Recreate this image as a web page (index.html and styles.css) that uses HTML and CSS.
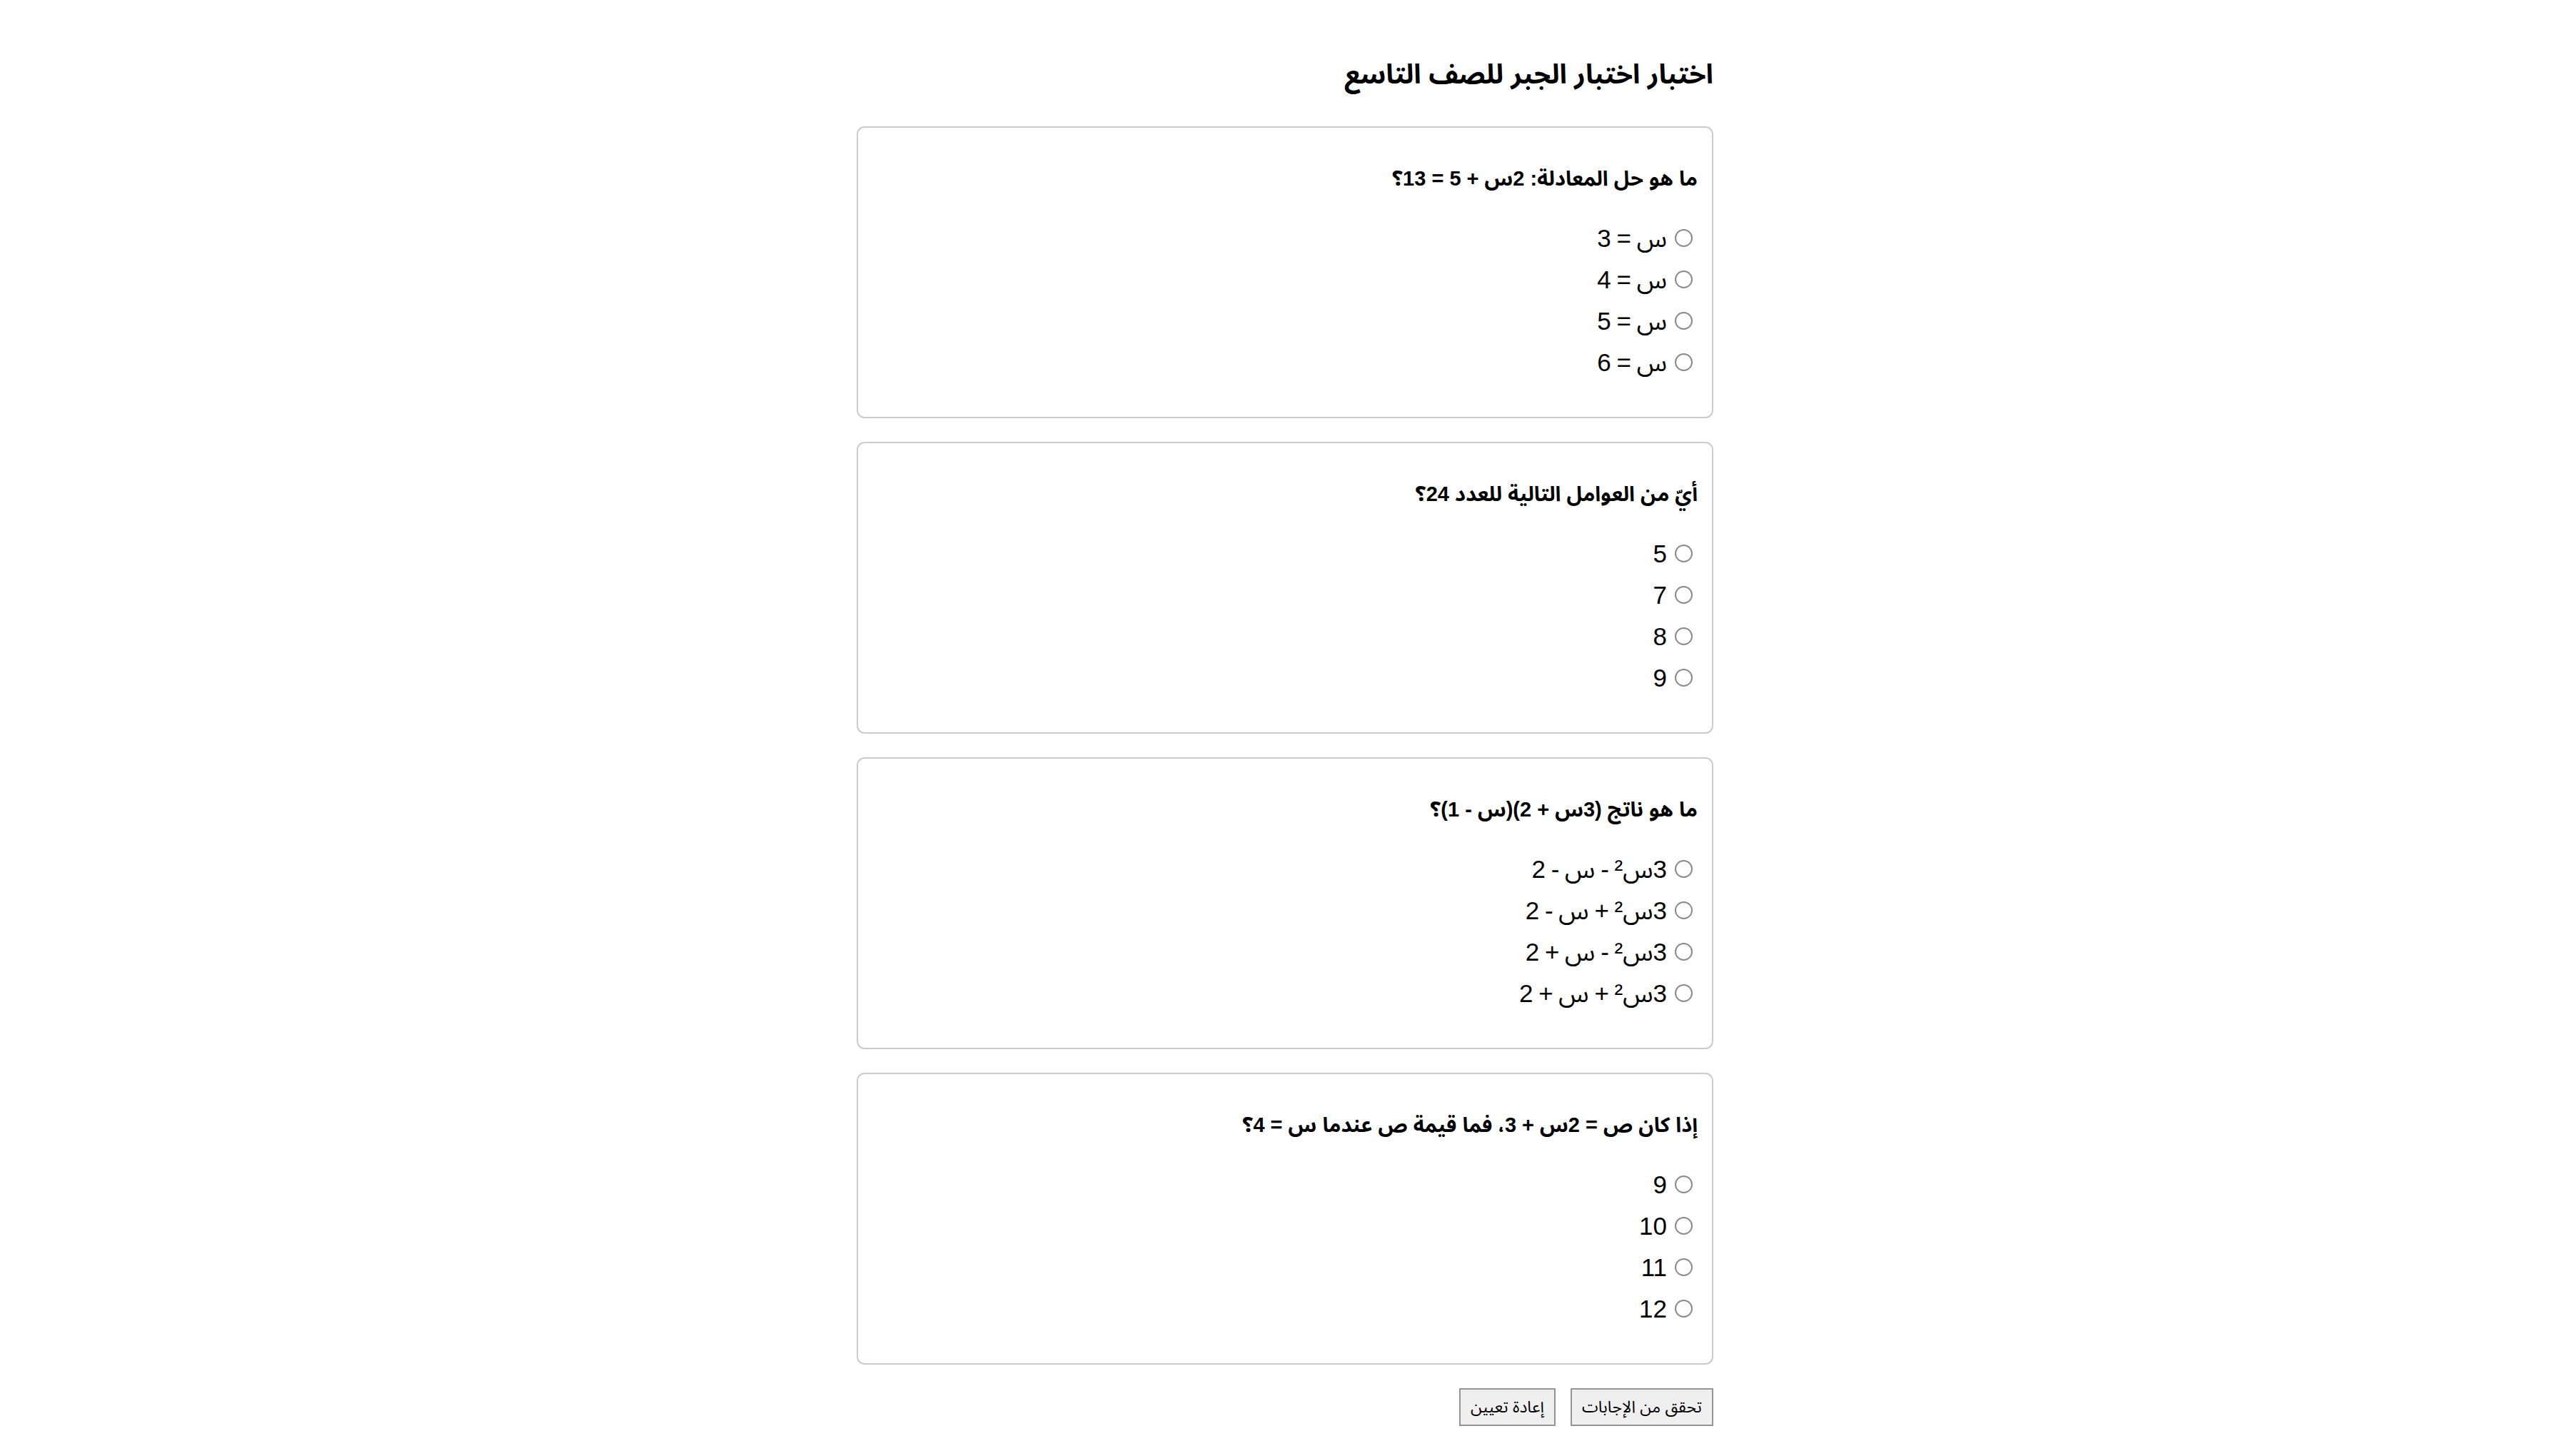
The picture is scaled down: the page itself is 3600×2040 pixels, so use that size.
FILE: index.html
```html
<!DOCTYPE html>
<html lang="ar" dir="rtl">
<head>
<meta charset="utf-8">
<title>اختبار الجبر للصف التاسع</title>
<link rel="stylesheet" href="styles.css">
</head>
<body>
<main class="quiz">
  <h1 class="quiz-title">اختبار اختبار الجبر للصف التاسع</h1>

  <section class="card">
    <p class="question">ما هو حل المعادلة: 2س + 5 = 13؟</p>
    <div class="options">
      <label class="option"><input type="radio" name="q1" class="radio"><span>س = 3</span></label>
      <label class="option"><input type="radio" name="q1" class="radio"><span>س = 4</span></label>
      <label class="option"><input type="radio" name="q1" class="radio"><span>س = 5</span></label>
      <label class="option"><input type="radio" name="q1" class="radio"><span>س = 6</span></label>
    </div>
  </section>

  <section class="card">
    <p class="question">أيّ من العوامل التالية للعدد 24؟</p>
    <div class="options">
      <label class="option"><input type="radio" name="q2" class="radio"><span>5</span></label>
      <label class="option"><input type="radio" name="q2" class="radio"><span>7</span></label>
      <label class="option"><input type="radio" name="q2" class="radio"><span>8</span></label>
      <label class="option"><input type="radio" name="q2" class="radio"><span>9</span></label>
    </div>
  </section>

  <section class="card">
    <p class="question">ما هو ناتج (3س + 2)(س - 1)؟</p>
    <div class="options">
      <label class="option"><input type="radio" name="q3" class="radio"><span>3س² - س - 2</span></label>
      <label class="option"><input type="radio" name="q3" class="radio"><span>3س² + س - 2</span></label>
      <label class="option"><input type="radio" name="q3" class="radio"><span>3س² - س + 2</span></label>
      <label class="option"><input type="radio" name="q3" class="radio"><span>3س² + س + 2</span></label>
    </div>
  </section>

  <section class="card">
    <p class="question">إذا كان ص = 2س + 3، فما قيمة ص عندما س = 4؟</p>
    <div class="options">
      <label class="option"><input type="radio" name="q4" class="radio"><span>9</span></label>
      <label class="option"><input type="radio" name="q4" class="radio"><span>10</span></label>
      <label class="option"><input type="radio" name="q4" class="radio"><span>11</span></label>
      <label class="option"><input type="radio" name="q4" class="radio"><span>12</span></label>
    </div>
  </section>

  <div class="actions">
    <button type="button" class="btn">تحقق من الإجابات</button>
    <button type="button" class="btn">إعادة تعيين</button>
  </div>
</main>
</body>
</html>
```
FILE: styles.css
```css
html, body {
  margin: 0;
  padding: 0;
  background: #ffffff;
}

body {
  font-family: "Liberation Sans", Arial, "Noto Sans Arabic", "DejaVu Sans", sans-serif;
  color: #000000;
  direction: rtl;
}

.quiz {
  width: 1200px;
  margin: 0 auto;
  padding: 81px 0 40px;
  box-sizing: border-box;
}

.quiz-title {
  margin: 0 0 50px;
  font-size: 38px;
  line-height: 46px;
  font-weight: bold;
  text-align: right;
}

.card {
  border: 2px solid #cccccc;
  border-radius: 11px;
  padding: 20px;
  margin-bottom: 33px;
  background: #ffffff;
  box-sizing: border-box;
}

.question {
  margin: 36px 0 38px;
  font-size: 29px;
  line-height: 31px;
  font-weight: bold;
}

.options {
  display: flex;
  flex-direction: column;
  margin-bottom: 28px;
}

.option {
  display: flex;
  align-items: center;
  height: 58px;
  font-size: 35px;
  line-height: 41px;
  word-spacing: -2px;
}

.radio {
  appearance: none;
  -webkit-appearance: none;
  width: 25px;
  height: 25px;
  border: 2px solid #8a8a8a;
  border-radius: 50%;
  margin: 0 7px 0 11px;
  background: #ffffff;
  box-sizing: border-box;
  flex: none;
}

.actions {
  display: flex;
  gap: 21px;
}

.btn {
  height: 53px;
  padding: 0 14px;
  font-family: "Liberation Sans", Arial, "Noto Sans Arabic", "DejaVu Sans", sans-serif;
  font-size: 23px;
  color: #000000;
  background: #efefef;
  border: 2px solid #949494;
  border-radius: 0;
}
```
